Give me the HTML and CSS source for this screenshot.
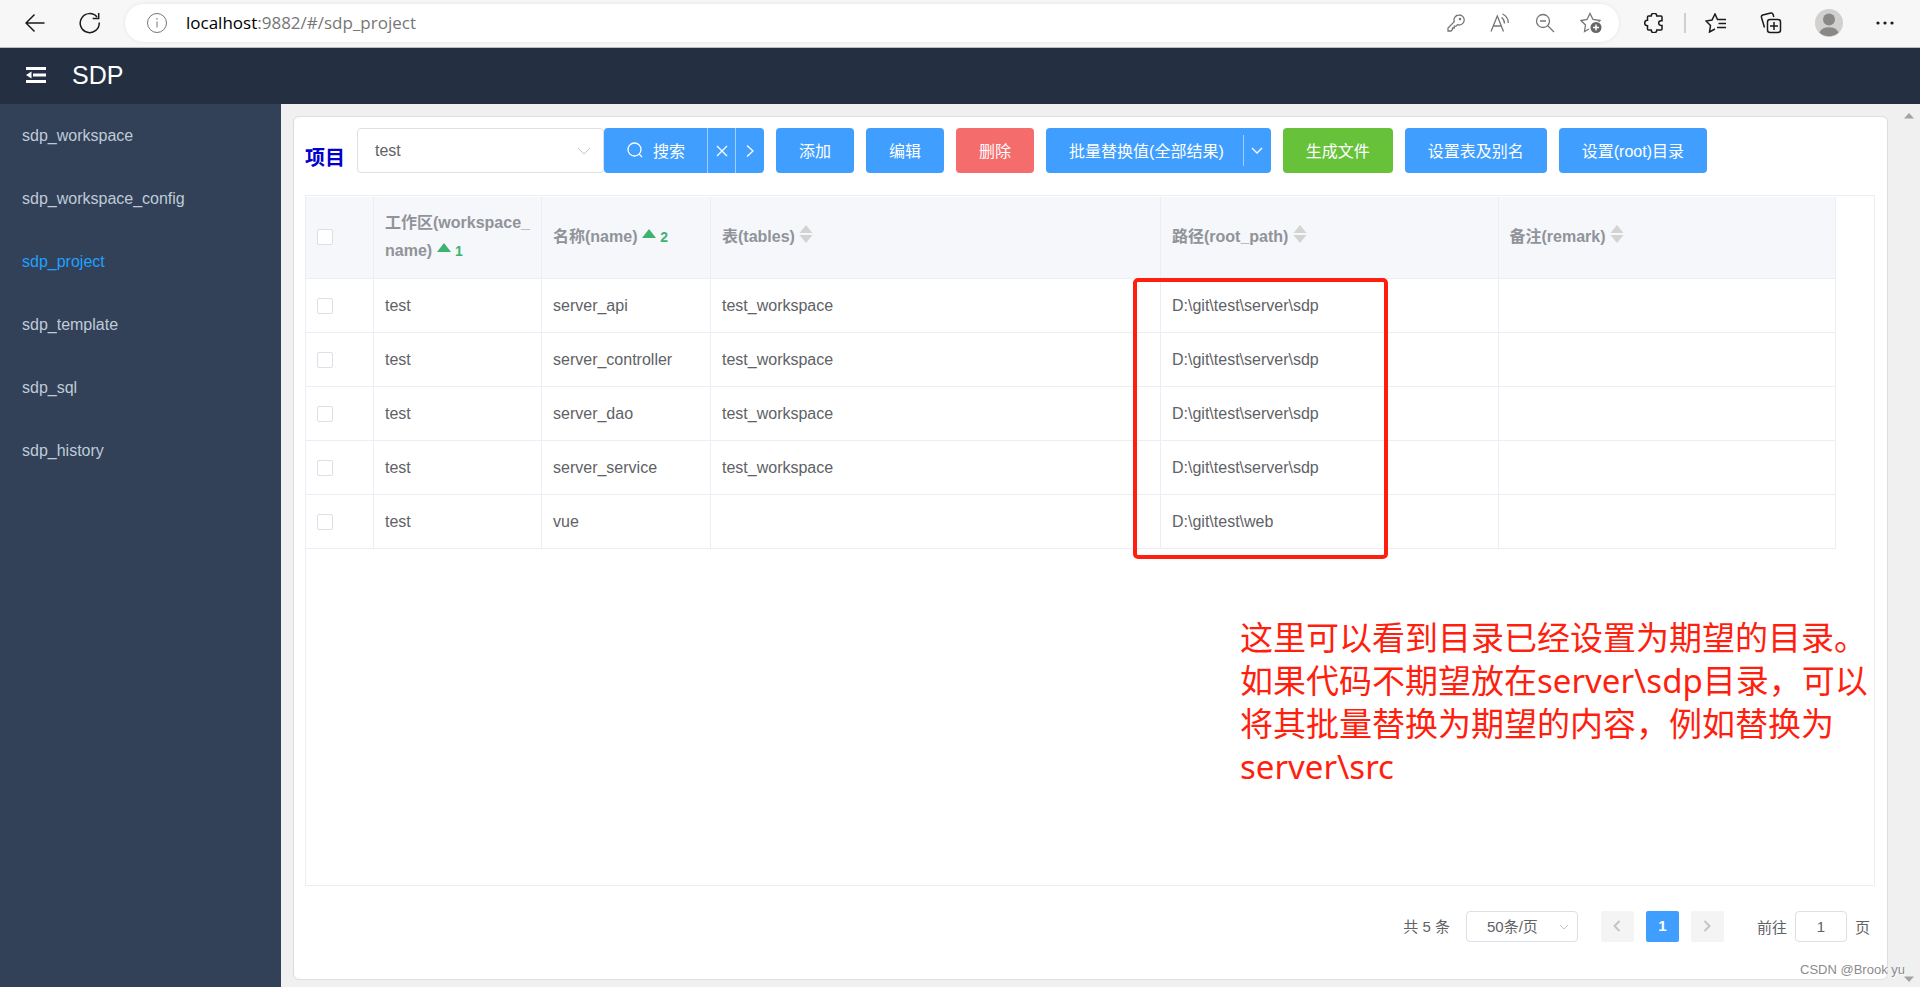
FILE: index.html
```html
<!DOCTYPE html>
<html lang="zh-CN">
<head>
<meta charset="utf-8">
<title>SDP</title>
<link rel="stylesheet" href="styles.css">
</head>
<body>
<div class="browser">
  <button class="tool" aria-label="后退"><svg width="20" height="20" viewBox="0 0 20 20"><path d="M19.500 10H1M9.500 1.500 1 10l8.500 8.500"/></svg></button>
  <button class="tool tool-reload" aria-label="刷新"><svg width="22" height="22" viewBox="0 0 22 22"><path d="M20.200 10.500A9.500 9.500 0 1 1 18 5M19.700 1v5.500h-6"/></svg></button>
  <div class="address">
    <svg class="info" width="22" height="22" viewBox="0 0 22 22"><circle cx="11" cy="11" r="9.500"/><path d="M11 9.500v6M11 6v1.800"/></svg>
    <span class="url"><span class="host">localhost</span>:9882/#/sdp_project</span>
    <div class="address-tools">
      <button class="tool" aria-label="密码"><svg width="18" height="18" viewBox="0 0 18 18"><path d="M12 1a5 5 0 1 1-1.500 9.700L9 12.200H7.300V14H5.500v1.500L4 17H1v-3l6.300-6.300A5 5 0 0 1 12 1z"/><circle cx="13" cy="5" r=".6"/></svg></button>
      <button class="tool" aria-label="朗读"><svg width="20" height="20" viewBox="0 0 20 20"><path d="M1 18.500 7.300 3l6.200 15.500M3.200 13h8.300M11.500 4.500q3 2 3 6M12.500 1q6 3 5.800 9"/></svg></button>
      <button class="tool" aria-label="缩小"><svg width="20" height="20" viewBox="0 0 20 20"><circle cx="8" cy="8" r="6.500"/><path d="M5 8h6M12.800 12.800 19 19"/></svg></button>
      <button class="tool" aria-label="收藏"><svg width="22" height="22" viewBox="0 0 22 22"><path d="M9 17 4.500 19.500l1-6.500L1 8.500l6-1L10 1.500l3 6 7 1-1.500 1.500"/><circle class="solid" cx="16" cy="15.500" r="5.500"/><path class="plus" d="M16 12.500v6M13 15.500h6"/></svg></button>
    </div>
  </div>
  <div class="browser-tools">
    <button class="tool" aria-label="扩展"><svg width="20" height="20" viewBox="0 0 20 20"><path d="M3.500 4q0-1 1-1h2.700a2.800 2.800 0 0 1 5.600 0H17q1 0 1 1v3.800h-1a2.300 2.300 0 0 0 0 4.600h1V16q0 1-1 1h-4.200a2.800 2.800 0 0 1-5.600 0H4.500q-1 0-1-1v-3.200a2.800 2.800 0 0 1 0-5.600z"/></svg></button>
    <span class="separator"></span>
    <button class="tool" aria-label="收藏夹"><svg width="22" height="20" viewBox="0 0 22 20"><path d="M10 16 4.500 19l1-6.500L1 8l6-1 3-6 2.500 5.500H21M13.500 10.500H21M12 14.500h9"/></svg></button>
    <button class="tool" aria-label="集锦"><svg width="22" height="22" viewBox="0 0 22 22"><rect x="7.500" y="7.500" width="13" height="13" rx="2.500"/><path d="M14 10v8M10 14h8M4.500 15.500 1.500 5.500q-.5-2 1.300-2.500l8-2q1.700-.4 2.300 1.500l.7 2.500"/></svg></button>
    <button class="tool" aria-label="用户"><svg width="28" height="28" viewBox="0 0 28 28"><circle class="face-bg" cx="14" cy="14" r="14"/><circle class="face" cx="14" cy="10.500" r="6"/><path class="face" d="M4.500 23.500a10 7.500 0 0 1 19 0A14 14 0 0 1 4.500 23.500z"/></svg></button>
    <button class="tool" aria-label="更多"><svg width="18" height="4" viewBox="0 0 18 4"><g class="dots"><circle cx="2" cy="2" r="1.600"/><circle cx="9" cy="2" r="1.600"/><circle cx="16" cy="2" r="1.600"/></g></svg></button>
  </div>
</div>

<header class="app-header">
  <button class="fold" aria-label="折叠菜单"><svg width="20" height="16" viewBox="0 0 20 16"><path d="M0 0h20v3H0zM7 6.500h13v3H7zM0 13h20v3H0zM5.500 4.500v7L0 8z"/></svg></button>
  <span class="brand">SDP</span>
</header>

<div class="app-body">
  <nav class="sidebar">
    <a href="#/sdp_workspace">sdp_workspace</a>
    <a href="#/sdp_workspace_config">sdp_workspace_config</a>
    <a href="#/sdp_project" class="active">sdp_project</a>
    <a href="#/sdp_template">sdp_template</a>
    <a href="#/sdp_sql">sdp_sql</a>
    <a href="#/sdp_history">sdp_history</a>
  </nav>
  <main class="main">
    <section class="card">
      <div class="toolbar">
        <label class="title" for="project">项目</label>
        <div class="select">
          <select id="project"><option>test</option></select>
          <svg width="14" height="8" viewBox="0 0 14 8"><path d="M1 1l6 6 6-6"/></svg>
        </div>
        <div class="group">
          <button class="btn search"><svg width="16" height="16" viewBox="0 0 16 16"><circle cx="7.500" cy="7.500" r="6.500"/><path d="M12 12l3 3"/></svg>搜索</button>
          <button class="btn mini" aria-label="清除"><svg width="12" height="12" viewBox="0 0 12 12"><path d="M1 1l10 10M11 1 1 11"/></svg></button>
          <button class="btn mini" aria-label="展开"><svg width="8" height="12" viewBox="0 0 8 12"><path d="M1 0.500l6 5.500-6 5.500"/></svg></button>
        </div>
        <div class="actions">
          <button class="btn">添加</button>
          <button class="btn">编辑</button>
          <button class="btn danger">删除</button>
          <div class="group">
            <button class="btn batch">批量替换值(全部结果)</button>
            <button class="btn drop" aria-label="更多操作"><svg width="12" height="8" viewBox="0 0 12 8"><path d="M1 1l5 5 5-5"/></svg></button>
          </div>
          <button class="btn success">生成文件</button>
          <button class="btn">设置表及别名</button>
          <button class="btn">设置(root)目录</button>
        </div>
      </div>

      <div class="table-box">
        <table class="grid">
          <colgroup><col class="c-check"><col class="c-ws"><col class="c-name"><col class="c-tables"><col class="c-path"><col class="c-path"></colgroup>
          <thead>
            <tr>
              <th><input type="checkbox" aria-label="全选"></th>
              <th>工作区(workspace_<wbr>name) <svg class="up" width="14" height="10" viewBox="0 0 14 10"><path d="M7 0l7 9H0z"/></svg> <span class="rank">1</span></th>
              <th>名称(name) <svg class="up" width="14" height="10" viewBox="0 0 14 10"><path d="M7 0l7 9H0z"/></svg> <span class="rank">2</span></th>
              <th>表(tables) <svg class="sort" width="14" height="18" viewBox="0 0 14 18"><path d="M7 0l6.500 8H.5zM.5 10h13L7 18z"/></svg></th>
              <th>路径(root_path) <svg class="sort" width="14" height="18" viewBox="0 0 14 18"><path d="M7 0l6.500 8H.5zM.5 10h13L7 18z"/></svg></th>
              <th>备注(remark) <svg class="sort" width="14" height="18" viewBox="0 0 14 18"><path d="M7 0l6.500 8H.5zM.5 10h13L7 18z"/></svg></th>
            </tr>
          </thead>
          <tbody>
            <tr><td><input type="checkbox" aria-label="server_api"></td><td>test</td><td>server_api</td><td>test_workspace</td><td>D:\git\test\server\sdp</td><td></td></tr>
            <tr><td><input type="checkbox" aria-label="server_controller"></td><td>test</td><td>server_controller</td><td>test_workspace</td><td>D:\git\test\server\sdp</td><td></td></tr>
            <tr><td><input type="checkbox" aria-label="server_dao"></td><td>test</td><td>server_dao</td><td>test_workspace</td><td>D:\git\test\server\sdp</td><td></td></tr>
            <tr><td><input type="checkbox" aria-label="server_service"></td><td>test</td><td>server_service</td><td>test_workspace</td><td>D:\git\test\server\sdp</td><td></td></tr>
            <tr><td><input type="checkbox" aria-label="vue"></td><td>test</td><td>vue</td><td></td><td>D:\git\test\web</td><td></td></tr>
          </tbody>
        </table>
      </div>

      <div class="pager">
        <span class="total">共 5 条</span>
        <div class="select page-size">
          <select aria-label="每页条数"><option>50条/页</option></select>
          <svg width="10" height="6" viewBox="0 0 10 6"><path d="M1 1l4 4 4-4"/></svg>
        </div>
        <div class="pages">
          <button aria-label="上一页"><svg width="8" height="12" viewBox="0 0 8 12"><path d="M6.500 1 1.500 6l5 5"/></svg></button>
          <button class="current">1</button>
          <button aria-label="下一页"><svg width="8" height="12" viewBox="0 0 8 12"><path d="M1.500 1l5 5-5 5"/></svg></button>
        </div>
        <label class="jump">前往<input type="text" value="1">页</label>
      </div>
    </section>
  </main>
  <div class="scrollbar">
    <svg width="10" height="6" viewBox="0 0 10 6"><path d="M5 0l5 5.500H0z"/></svg>
    <svg width="10" height="6" viewBox="0 0 10 6"><path d="M0 .5h10L5 6z"/></svg>
  </div>
</div>

<div class="mark-box"></div>
<p class="note">这里可以看到目录已经设置为期望的目录。<br>如果代码不期望放在server\sdp目录，可以<br>将其批量替换为期望的内容，例如替换为<br>server\src</p>
<span class="watermark">CSDN @Brook yu</span>
</body>
</html>
```

FILE: styles.css
```css
* { box-sizing: border-box; }

body {
  margin: 0;
  height: 100vh;
  display: flex;
  flex-direction: column;
  position: relative;
  overflow: hidden;
  background: #f0f0f0;
  color: #606266;
  font: 16px "Liberation Sans", "Noto Sans CJK SC", sans-serif;
}

button, input, select { font: inherit; color: inherit; margin: 0; }
button { border: 0; padding: 0; background: none; }
svg { display: block; fill: none; stroke: currentColor; flex: none; }

/* browser bar */
.browser {
  display: flex;
  align-items: center;
  flex: none;
  height: 48px;
  padding: 0 26px 2px 25px;
  border-bottom: 1px solid #b9bfc0;
  background: #f7f7f7;
  color: #1b1b1b;
}
.tool { display: flex; stroke-width: 1.5; }
.tool-reload { margin: 0 24px 0 34px; }
.address {
  flex: 1;
  display: flex;
  align-items: center;
  height: 38px;
  padding: 0 17px 0 21px;
  border-radius: 19px;
  background: #fff;
  box-shadow: 0 0 4px rgba(0, 0, 0, .08);
  color: #767676;
}
.url { flex: 1; margin-left: 18px; padding-bottom: 1px; font: 17px "Open Sans", "Noto Sans", sans-serif; }
.host { color: #000; }
.address-tools { display: flex; align-items: center; gap: 25px; }
.address-tools .tool { stroke-width: 1.3; }
.solid { fill: #666; stroke: none; }
.plus { stroke: #fff; stroke-width: 1.5; }
.browser-tools { display: flex; align-items: center; margin-left: 25px; }
.separator { width: 2px; height: 20px; margin: 0 19px 0 20px; background: #cfcfcf; }
.browser-tools .tool + .tool { margin-left: 33px; }
.face-bg { fill: #d2d0ce; stroke: none; }
.face { fill: #8a8886; stroke: none; }
.dots { fill: #1b1b1b; stroke: none; }

/* app header */
.app-header {
  display: flex;
  align-items: center;
  flex: none;
  height: 56px;
  padding: 0 26px 2px;
  gap: 26px;
  background: #242f42;
  color: #fff;
  font-size: 25px;
}
.fold svg { fill: #fff; stroke: none; }

.app-body { flex: 1; display: flex; min-height: 0; }

.sidebar { width: 281px; flex: none; background: #324157; }
.sidebar a {
  display: block;
  padding: 0 22px;
  line-height: 63px;
  color: #bfcbd9;
  text-decoration: none;
}
.sidebar a.active { color: #20a0ff; }

.main { flex: 1; display: flex; min-width: 0; padding: 12px 10px 7px 12px; }
.card {
  flex: 1;
  display: flex;
  flex-direction: column;
  min-width: 0;
  padding: 11px 12px 37px 11px;
  border: 1px solid #ddd;
  border-radius: 6px;
  background: #fff;
}
.scrollbar {
  width: 22px;
  flex: none;
  display: flex;
  flex-direction: column;
  justify-content: space-between;
  align-items: center;
  padding: 9px 0 5px;
  color: #a3a3a3;
}
.scrollbar svg { fill: currentColor; stroke: none; }

/* toolbar */
.toolbar { display: flex; height: 45px; flex: none; }
.title {
  align-self: flex-end;
  width: 52px;
  line-height: 30px;
  font-size: 20px;
  font-weight: 700;
  color: #00c;
}
.select { display: grid; align-items: center; }
.select > * { grid-area: 1 / 1; }
.select select {
  appearance: none;
  width: 100%;
  height: 100%;
  padding: 0 17px;
  border: 1px solid #dcdfe6;
  border-radius: 4px;
  background: #fff;
}
.select svg { justify-self: end; margin-right: 13px; color: #c0c4cc; pointer-events: none; }
.toolbar .select { width: 247px; }

.group { display: flex; }
.btn {
  display: flex;
  align-items: center;
  justify-content: center;
  padding: 0 23px 2px;
  border-radius: 4px;
  background: #409eff;
  color: #fff;
  white-space: nowrap;
}
.btn svg { stroke-width: 1.3; }
.group .btn:not(:last-child) { border-top-right-radius: 0; border-bottom-right-radius: 0; }
.group .btn:not(:first-child) { border-top-left-radius: 0; border-bottom-left-radius: 0; }
.search { gap: 10px; padding: 0 22px 2px 23px; }
.mini { width: 28px; padding: 0; border-left: 1px solid #a0cfff; }
.mini + .mini { width: 29px; }
.actions { display: flex; gap: 12px; margin-left: 12px; }
.batch { padding-right: 19px; }
.drop { position: relative; width: 28px; padding: 0; }
.drop::before {
  content: "";
  position: absolute;
  left: 0;
  top: 7px;
  bottom: 7px;
  width: 1px;
  background: #a0cfff;
}
.danger { background: #f56c6c; }
.success { background: #67c23a; }

/* table */
.table-box {
  flex: 1;
  margin-top: 22px;
  padding: 1px 38px 0 0;
  border: 1px solid #ebeef5;
}
.grid { width: 100%; table-layout: fixed; border-collapse: separate; border-spacing: 0; }
.c-check { width: 68px; }
.c-ws { width: 168px; }
.c-name { width: 169px; }
.c-tables { width: 450px; }
.grid th, .grid td {
  padding: 0 11px;
  border-right: 1px solid #ebeef5;
  border-bottom: 1px solid #ebeef5;
  text-align: left;
}
.grid th {
  height: 82px;
  padding-bottom: 2px;
  background: #f5f7fa;
  color: #909399;
  line-height: 28px;
}
.grid td { height: 54px; }
.grid input {
  appearance: none;
  display: block;
  width: 16px;
  height: 16px;
  border: 1px solid #dcdfe6;
  border-radius: 2px;
  background: #fff;
}
.grid svg { display: inline-block; stroke: none; }
.up { fill: #3cb371; vertical-align: 3px; }
.sort { fill: #d3d3d3; vertical-align: -1px; }
.rank { color: #3cb371; font-size: 14px; }

/* pagination */
.pager {
  display: flex;
  align-items: center;
  justify-content: flex-end;
  height: 31px;
  flex: none;
  margin: 25px 5px 0 0;
  font-size: 15px;
}
.total { padding-bottom: 2px; }
.page-size { width: 112px; height: 31px; margin: 0 23px 0 16px; }
.page-size select { padding: 0 20px; }
.page-size svg { margin-right: 9px; }
.pages { display: flex; gap: 12px; }
.pages button {
  display: flex;
  align-items: center;
  justify-content: center;
  width: 33px;
  height: 31px;
  padding-bottom: 2px;
  border-radius: 2px;
  background: #f4f4f5;
  color: #c0c4cc;
  stroke-width: 2;
}
.pages .current { background: #409eff; color: #fff; font-weight: 700; }
.jump { display: flex; align-items: center; gap: 8px; margin-left: 33px; }
.jump input {
  width: 52px;
  height: 31px;
  padding: 0;
  border: 1px solid #dcdfe6;
  border-radius: 4px;
  text-align: center;
}

/* annotations drawn over the page */
.mark-box {
  position: absolute;
  left: 1133px;
  top: 278px;
  width: 255px;
  height: 281px;
  border: 4px solid #ff1f0f;
  border-radius: 5px;
}
.note {
  position: absolute;
  left: 1240px;
  top: 616px;
  margin: 0;
  color: #ff1f0f;
  font: 33px/43px "Noto Sans", "Noto Sans CJK SC", sans-serif;
  white-space: nowrap;
}
.watermark {
  position: absolute;
  right: 15px;
  bottom: 9px;
  font-size: 13px;
  line-height: 16px;
  color: #8c8c8c;
  text-shadow: 1px 1px 1px #fff;
}
```
